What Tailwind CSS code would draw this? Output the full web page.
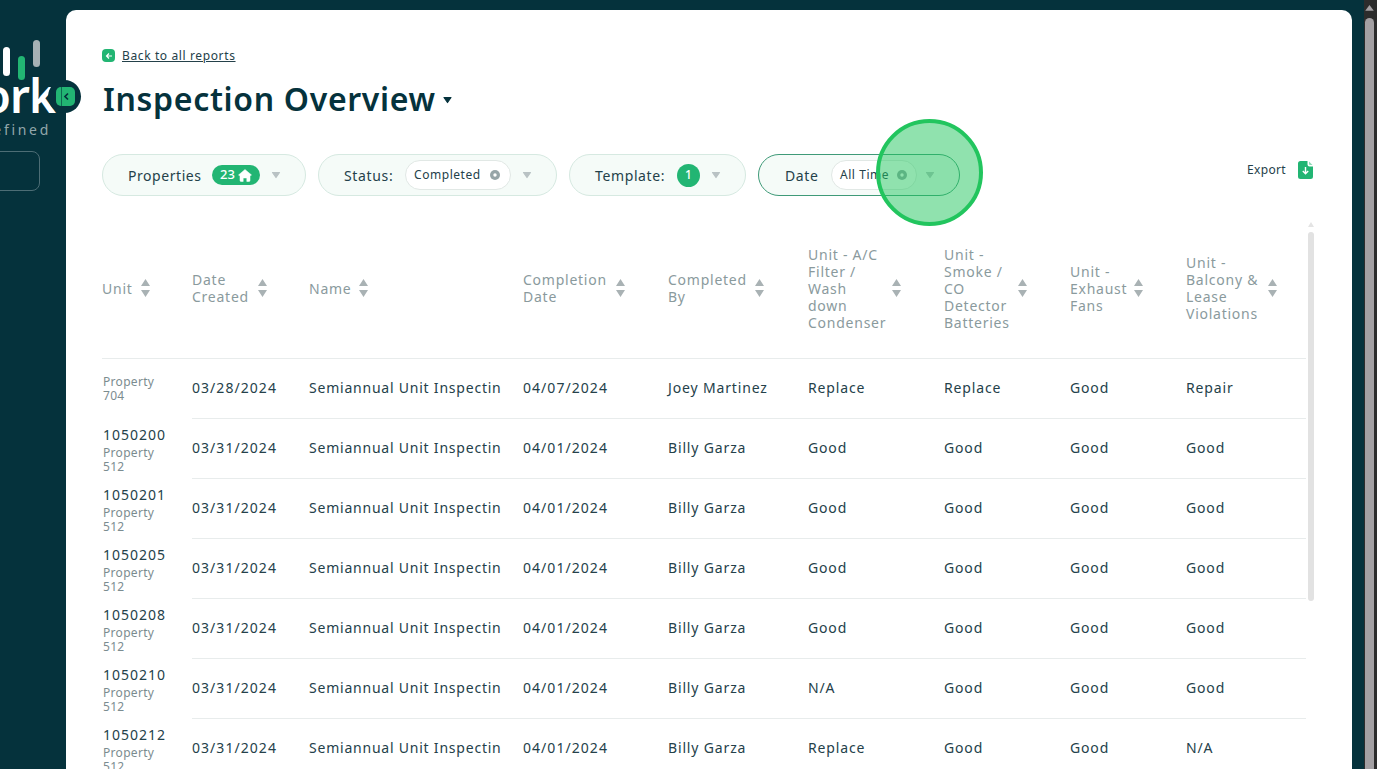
<!DOCTYPE html>
<html lang="en">
<head>
<meta charset="utf-8">
<title>Inspection Overview</title>
<script src="https://cdn.jsdelivr.net/npm/@tailwindcss/browser@4"></script>
</head>
<body class="m-0 overflow-hidden bg-[#05323c] font-['Noto_Sans',sans-serif] text-[#24414a]">
<div class="relative flex h-[769px] w-[1377px] overflow-hidden">
  <!-- Sidebar -->
  <aside class="relative w-[66px] shrink-0">
    <div class="h-full w-full overflow-hidden">
      <div class="flex h-[75px] items-start gap-[8px] pl-[3px]">
        <span class="mt-[47px] h-[29px] w-[7px] rounded-full bg-white"></span>
        <span class="mt-[56px] h-[24px] w-[7px] rounded-full bg-[#22b573]"></span>
        <span class="mt-[40px] h-[27px] w-[7px] rounded-full bg-[#a5b1b4]"></span>
      </div>
      <div class="flex h-[38px] items-center justify-end pr-[11px] pt-[2px]">
        <span class="text-[46px] leading-none font-semibold tracking-[-1px] whitespace-nowrap text-white">ork</span>
      </div>
      <div class="mt-[8px] flex justify-end pr-[15px]">
        <span class="text-[14px] leading-[18px] tracking-[2.7px] whitespace-nowrap text-[#93a7ab]">efined</span>
      </div>
      <div class="mt-[12px] ml-[-20px] h-[40px] w-[60px] rounded-lg border border-[#4d6d75]"></div>
      <div class="mt-[71px] ml-[-7px] text-[13px] leading-[18px] text-white">s</div>
    </div>
    <div class="absolute left-[48px] top-[80px] z-10 flex h-[33px] w-[33px] items-center justify-center rounded-full bg-[#05323c]">
      <svg width="19" height="19" viewBox="0 0 19 19" class="ml-[2px]"><rect width="19" height="19" rx="5" fill="#22b573"/><rect x="5" width="1" height="19" fill="#0d6a52"/><path d="M12 6.500 9 9.500l3 3" fill="none" stroke="#05323c" stroke-width="1.700"/></svg>
    </div>
  </aside>

  <!-- Card -->
  <main class="mt-[10px] h-[800px] w-[1286px] shrink-0 rounded-t-[10px] bg-white pl-[36px] pt-[39px]">
    <a class="flex h-[13px] items-center gap-[7px]">
      <span class="flex h-[13px] w-[13px] items-center justify-center rounded-[4px] bg-[#22b573]">
        <svg width="8" height="8" viewBox="0 0 8 8" fill="none"><path d="M7 4H1.500M4 1.500 1.500 4 4 6.500" stroke="#fff" stroke-width="1.200"/></svg>
      </span>
      <span class="text-[12px] leading-[16px] tracking-[0.62px] text-[#24414a] underline">Back to all reports</span>
    </a>
    <div class="mt-[17px] flex h-[40px] items-center gap-[7px] pl-[1px]">
      <h1 class="text-[32px] leading-[40px] font-semibold tracking-[0.68px] text-[#05323c]">Inspection Overview</h1>
      <svg width="9" height="8" viewBox="0 0 9 8" class="mt-[1px]"><path d="M1 1.500h7L4.500 6.500z" fill="#05323c" stroke="#05323c" stroke-width="1.200" stroke-linejoin="round"/></svg>
    </div>

    <div class="mt-[35px] flex h-[42px] w-[1211px] items-center">
      <div class="flex h-[42px] w-[204px] items-center rounded-full border border-[#d6e9e1] bg-[#f5fbf8] pl-[25px]">
        <span class="w-[84px] text-[14px] tracking-[0.55px]">Properties</span>
        <span class="flex h-[20px] w-[48px] items-center justify-center gap-[3px] rounded-full bg-[#22b573] text-[13px] font-medium text-white">23
          <svg width="14" height="13" viewBox="0 0 14 13"><path d="M7 .5 13.500 6 12 6.800V11.500a1 1 0 0 1-1 1H8.800V9H5.200v3.500H3a1 1 0 0 1-1-1V6.800L.5 6z" fill="#fff" stroke="#fff" stroke-width=".5" stroke-linejoin="round"/></svg>
        </span>
        <svg class="ml-[11px]" width="10" height="8" viewBox="0 0 10 8"><path d="M1.500 1.500h7L5 6.500z" fill="#b9c2c4" stroke="#b9c2c4" stroke-width="1.200" stroke-linejoin="round"/></svg>
      </div>
      <div class="ml-[12px] flex h-[42px] w-[239px] items-center rounded-full border border-[#d6e9e1] bg-[#f5fbf8] pl-[25px]">
        <span class="w-[61px] text-[14px] tracking-[0.65px]">Status:</span>
        <span class="flex h-[30px] w-[106px] items-center justify-between rounded-full border border-[#e1e8e5] bg-white pl-[8px] pr-[10px] text-[12px] tracking-[0.55px]">Completed
          <svg width="10" height="10" viewBox="0 0 10 10"><circle cx="5" cy="5" r="5" fill="#97a5a8"/><circle cx="5" cy="5" r="1.700" fill="#fff"/></svg>
        </span>
        <svg class="ml-[11px]" width="10" height="8" viewBox="0 0 10 8"><path d="M1.500 1.500h7L5 6.500z" fill="#b9c2c4" stroke="#b9c2c4" stroke-width="1.200" stroke-linejoin="round"/></svg>
      </div>
      <div class="ml-[12px] flex h-[42px] w-[177px] items-center rounded-full border border-[#d6e9e1] bg-[#f5fbf8] pl-[25px]">
        <span class="w-[82px] text-[14px] tracking-[0.62px]">Template:</span>
        <span class="flex h-[23px] w-[23px] items-center justify-center rounded-full bg-[#22b573] text-[12px] font-medium text-white">1</span>
        <svg class="ml-[11px]" width="10" height="8" viewBox="0 0 10 8"><path d="M1.500 1.500h7L5 6.500z" fill="#b9c2c4" stroke="#b9c2c4" stroke-width="1.200" stroke-linejoin="round"/></svg>
      </div>
      <div class="ml-[12px] flex h-[42px] w-[202px] items-center rounded-full border border-[#3f9a78] bg-[#f5fbf8] pl-[26px]">
        <span class="w-[46px] text-[14px] tracking-[0.6px]">Date</span>
        <span class="flex h-[30px] w-[86px] items-center justify-between rounded-full border border-[#e1e8e5] bg-white pl-[8px] pr-[9px] text-[12px] tracking-[0.55px] whitespace-nowrap">All Time
          <svg width="10" height="10" viewBox="0 0 10 10"><circle cx="5" cy="5" r="5" fill="#97a5a8"/><circle cx="5" cy="5" r="1.700" fill="#fff"/></svg>
        </span>
        <svg class="ml-[8px]" width="10" height="8" viewBox="0 0 10 8"><path d="M1.500 1.500h7L5 6.500z" fill="#b9c2c4" stroke="#b9c2c4" stroke-width="1.200" stroke-linejoin="round"/></svg>
      </div>
      <div class="ml-auto mb-[11px] flex items-center gap-[12px]">
        <span class="text-[12px] tracking-[0.35px]">Export</span>
        <svg width="15" height="18" viewBox="0 0 15 18"><path d="M2.500 0H9.500v3.500a2 2 0 0 0 2 2H15v10a2.500 2.500 0 0 1-2.500 2.500h-10A2.500 2.500 0 0 1 0 15.500v-13A2.500 2.500 0 0 1 2.500 0z" fill="#22b573"/><path d="M11 .5 14.500 4H12a1 1 0 0 1-1-1z" fill="#8fdab8"/><path d="M7.500 6v6.500M4.800 10l2.700 2.700 2.700-2.700" stroke="#fff" stroke-width="1.400" fill="none"/></svg>
      </div>
    </div>

    <div class="mt-[26px] flex items-start gap-[2px]">
      <div class="w-[1204px] shrink-0">
        <!-- Header -->
        <div class="mt-[18px] grid h-[119px] grid-cols-[90px_117px_214px_145px_140px_136px_126px_116px_120px] items-center border-b border-[#e8ecec] pb-[22px] text-[14px] leading-[17px] tracking-[0.75px] text-[#8a9a9d]">
          <div class="flex items-center gap-[8px]"><span>Unit</span><svg width="9" height="18" viewBox="0 0 9 18"><path d="M4.500 0 9 7H0zM4.500 18 0 11h9z" fill="#a9b2b4"/></svg></div>
          <div class="flex items-center"><span class="w-[66px]">Date<br>Created</span><svg width="9" height="18" viewBox="0 0 9 18"><path d="M4.500 0 9 7H0zM4.500 18 0 11h9z" fill="#a9b2b4"/></svg></div>
          <div class="flex items-center gap-[8px]"><span>Name</span><svg width="9" height="18" viewBox="0 0 9 18"><path d="M4.500 0 9 7H0zM4.500 18 0 11h9z" fill="#a9b2b4"/></svg></div>
          <div class="flex items-center"><span class="w-[93px]">Completion<br>Date</span><svg width="9" height="18" viewBox="0 0 9 18"><path d="M4.500 0 9 7H0zM4.500 18 0 11h9z" fill="#a9b2b4"/></svg></div>
          <div class="flex items-center"><span class="w-[87px]">Completed<br>By</span><svg width="9" height="18" viewBox="0 0 9 18"><path d="M4.500 0 9 7H0zM4.500 18 0 11h9z" fill="#a9b2b4"/></svg></div>
          <div class="flex items-center"><span class="w-[84px]">Unit - A/C<br>Filter /<br>Wash<br>down<br>Condenser</span><svg width="9" height="18" viewBox="0 0 9 18"><path d="M4.500 0 9 7H0zM4.500 18 0 11h9z" fill="#a9b2b4"/></svg></div>
          <div class="flex items-center"><span class="w-[74px]">Unit -<br>Smoke /<br>CO<br>Detector<br>Batteries</span><svg width="9" height="18" viewBox="0 0 9 18"><path d="M4.500 0 9 7H0zM4.500 18 0 11h9z" fill="#a9b2b4"/></svg></div>
          <div class="flex items-center"><span class="w-[64px]">Unit -<br>Exhaust<br>Fans</span><svg width="9" height="18" viewBox="0 0 9 18"><path d="M4.500 0 9 7H0zM4.500 18 0 11h9z" fill="#a9b2b4"/></svg></div>
          <div class="flex items-center"><span class="w-[82px]">Unit -<br>Balcony &amp;<br>Lease<br>Violations</span><svg width="9" height="18" viewBox="0 0 9 18"><path d="M4.500 0 9 7H0zM4.500 18 0 11h9z" fill="#a9b2b4"/></svg></div>
        </div>

        <!-- Rows -->
        <div class="grid h-[60px] grid-cols-[90px_117px_214px_145px_140px_136px_126px_116px_120px] items-center text-[14px] tracking-[0.85px]">
          <div class="flex h-[60px] flex-col justify-center pl-[1px] text-[12px] leading-[14px] tracking-[0.3px] text-[#7b8c90]"><span>Property</span><span>704</span></div>
          <div class="col-span-8 grid h-[60px] grid-cols-subgrid items-center border-b border-[#e8ecec] pb-[3px]"><span class="tracking-[1.05px]">03/28/2024</span><span class="tracking-[0.78px]">Semiannual Unit Inspectin</span><span class="tracking-[1.05px]">04/07/2024</span><span>Joey Martinez</span><span>Replace</span><span>Replace</span><span>Good</span><span>Repair</span></div>
        </div>
        <div class="grid h-[60px] grid-cols-[90px_117px_214px_145px_140px_136px_126px_116px_120px] items-center text-[14px] tracking-[0.85px]">
          <div class="flex h-[60px] flex-col pl-[1px] pt-[7px] text-[12px] leading-[14px] tracking-[0.3px] text-[#7b8c90]"><span class="mb-[2px] text-[14px] leading-[18px] tracking-[1px] text-[#24414a]">1050200</span><span>Property</span><span>512</span></div>
          <div class="col-span-8 grid h-[60px] grid-cols-subgrid items-center border-b border-[#e8ecec] pb-[3px]"><span class="tracking-[1.05px]">03/31/2024</span><span class="tracking-[0.78px]">Semiannual Unit Inspectin</span><span class="tracking-[1.05px]">04/01/2024</span><span>Billy Garza</span><span>Good</span><span>Good</span><span>Good</span><span>Good</span></div>
        </div>
        <div class="grid h-[60px] grid-cols-[90px_117px_214px_145px_140px_136px_126px_116px_120px] items-center text-[14px] tracking-[0.85px]">
          <div class="flex h-[60px] flex-col pl-[1px] pt-[7px] text-[12px] leading-[14px] tracking-[0.3px] text-[#7b8c90]"><span class="mb-[2px] text-[14px] leading-[18px] tracking-[1px] text-[#24414a]">1050201</span><span>Property</span><span>512</span></div>
          <div class="col-span-8 grid h-[60px] grid-cols-subgrid items-center border-b border-[#e8ecec] pb-[3px]"><span class="tracking-[1.05px]">03/31/2024</span><span class="tracking-[0.78px]">Semiannual Unit Inspectin</span><span class="tracking-[1.05px]">04/01/2024</span><span>Billy Garza</span><span>Good</span><span>Good</span><span>Good</span><span>Good</span></div>
        </div>
        <div class="grid h-[60px] grid-cols-[90px_117px_214px_145px_140px_136px_126px_116px_120px] items-center text-[14px] tracking-[0.85px]">
          <div class="flex h-[60px] flex-col pl-[1px] pt-[7px] text-[12px] leading-[14px] tracking-[0.3px] text-[#7b8c90]"><span class="mb-[2px] text-[14px] leading-[18px] tracking-[1px] text-[#24414a]">1050205</span><span>Property</span><span>512</span></div>
          <div class="col-span-8 grid h-[60px] grid-cols-subgrid items-center border-b border-[#e8ecec] pb-[3px]"><span class="tracking-[1.05px]">03/31/2024</span><span class="tracking-[0.78px]">Semiannual Unit Inspectin</span><span class="tracking-[1.05px]">04/01/2024</span><span>Billy Garza</span><span>Good</span><span>Good</span><span>Good</span><span>Good</span></div>
        </div>
        <div class="grid h-[60px] grid-cols-[90px_117px_214px_145px_140px_136px_126px_116px_120px] items-center text-[14px] tracking-[0.85px]">
          <div class="flex h-[60px] flex-col pl-[1px] pt-[7px] text-[12px] leading-[14px] tracking-[0.3px] text-[#7b8c90]"><span class="mb-[2px] text-[14px] leading-[18px] tracking-[1px] text-[#24414a]">1050208</span><span>Property</span><span>512</span></div>
          <div class="col-span-8 grid h-[60px] grid-cols-subgrid items-center border-b border-[#e8ecec] pb-[3px]"><span class="tracking-[1.05px]">03/31/2024</span><span class="tracking-[0.78px]">Semiannual Unit Inspectin</span><span class="tracking-[1.05px]">04/01/2024</span><span>Billy Garza</span><span>Good</span><span>Good</span><span>Good</span><span>Good</span></div>
        </div>
        <div class="grid h-[60px] grid-cols-[90px_117px_214px_145px_140px_136px_126px_116px_120px] items-center text-[14px] tracking-[0.85px]">
          <div class="flex h-[60px] flex-col pl-[1px] pt-[7px] text-[12px] leading-[14px] tracking-[0.3px] text-[#7b8c90]"><span class="mb-[2px] text-[14px] leading-[18px] tracking-[1px] text-[#24414a]">1050210</span><span>Property</span><span>512</span></div>
          <div class="col-span-8 grid h-[60px] grid-cols-subgrid items-center border-b border-[#e8ecec] pb-[3px]"><span class="tracking-[1.05px]">03/31/2024</span><span class="tracking-[0.78px]">Semiannual Unit Inspectin</span><span class="tracking-[1.05px]">04/01/2024</span><span>Billy Garza</span><span>N/A</span><span>Good</span><span>Good</span><span>Good</span></div>
        </div>
        <div class="grid h-[60px] grid-cols-[90px_117px_214px_145px_140px_136px_126px_116px_120px] items-center text-[14px] tracking-[0.85px]">
          <div class="flex h-[60px] flex-col pl-[1px] pt-[7px] text-[12px] leading-[14px] tracking-[0.3px] text-[#7b8c90]"><span class="mb-[2px] text-[14px] leading-[18px] tracking-[1px] text-[#24414a]">1050212</span><span>Property</span><span>512</span></div>
          <div class="col-span-8 grid h-[60px] grid-cols-subgrid items-center border-b border-[#e8ecec] pb-[3px]"><span class="tracking-[1.05px]">03/31/2024</span><span class="tracking-[0.78px]">Semiannual Unit Inspectin</span><span class="tracking-[1.05px]">04/01/2024</span><span>Billy Garza</span><span>Replace</span><span>Good</span><span>Good</span><span>N/A</span></div>
        </div>
      </div>
      <!-- Table scrollbar -->
      <div class="flex w-[6px] shrink-0 flex-col items-center">
        <svg width="6" height="5" viewBox="0 0 6 5"><path d="M3 0 6 5H0z" fill="#e4e4e4"/></svg>
        <div class="mt-[5px] h-[369px] w-[6px] rounded-full bg-[#e2e2e2]"></div>
      </div>
    </div>
  </main>

  <!-- Page scrollbar -->
  <div class="ml-[12px] flex w-[13px] shrink-0 flex-col bg-[#2c2c2c] pl-[1px] pt-[5px]">
    <svg width="9" height="6" viewBox="0 0 9 6"><path d="M4.500 0 9 6H0z" fill="#a3a0a3"/></svg>
    <div class="mt-[7px] h-[780px] w-[9px] rounded-t-full bg-[#a3a0a3]"></div>
  </div>

  <!-- Click highlight -->
  <div class="absolute left-[876px] top-[119px] z-20 h-[107px] w-[107px] rounded-full border-[4px] border-[#22c55e] bg-[#22c55e]/50"></div>
</div>
</body>
</html>
